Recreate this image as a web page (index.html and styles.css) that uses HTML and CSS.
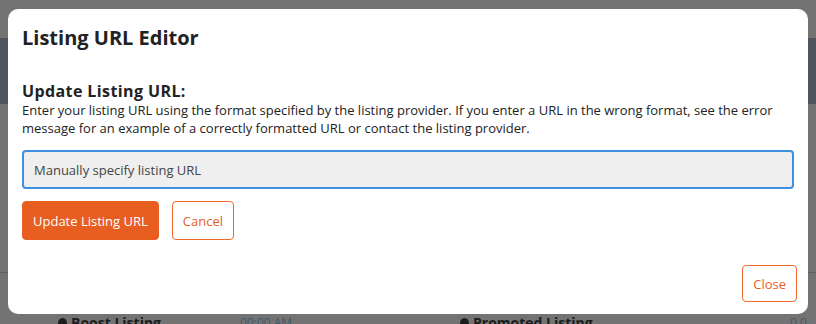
FILE: index.html
```html
<!DOCTYPE html>
<html lang="en">
<head>
  <meta charset="UTF-8" />
  <meta name="viewport" content="width=device-width, initial-scale=1.0" />
  <title>Listing URL Editor</title>
  <link rel="stylesheet" href="styles.css">
</head>
<body>
  <div class="page">
    <div class="page-header"></div>
    <div class="page-body"></div>
    <div class="page-rule"></div>
    <div class="page-footer">
      <span class="footer-item"><span class="dot"></span>Boost Listing</span>
      <span class="footer-meta">00:00 AM</span>
      <span class="footer-item"><span class="dot"></span>Promoted Listing</span>
      <span class="footer-meta">0.0</span>
    </div>
  </div>

  <div class="overlay">
    <div class="modal">
      <h1 class="modal-title">Listing URL Editor</h1>

      <div class="modal-content">
        <h2 class="field-label">Update Listing URL:</h2>
        <p class="field-help">Enter your listing URL using the format specified by the listing provider. If you enter a URL in the wrong format, see the error message for an example of a correctly formatted URL or contact the listing provider.</p>
        <input class="url-input" type="text" placeholder="Manually specify listing URL" />
        <div class="actions">
          <button class="btn btn-primary">Update Listing URL</button>
          <button class="btn btn-outline">Cancel</button>
        </div>
      </div>

      <div class="modal-footer">
        <button class="btn btn-outline btn-close">Close</button>
      </div>
    </div>
  </div>
</body>
</html>
```

FILE: styles.css
```css
body {
  margin: 0;
  background-color: #737373;
  font-family: "Open Sans", Arial, sans-serif;
  overflow: hidden;
  height: 324px;
}

/* page underneath the dimmed overlay */
.page {
  display: flex;
  flex-direction: column;
  height: 100%;
}

.page-header {
  margin-top: 38px;
  height: 66px;
  background-color: #4d555e;
}

.page-body {
  flex: 1;
}

.page-rule {
  height: 1px;
  background-color: #5e5e5e;
}

.page-footer {
  height: 51px;
  box-sizing: border-box;
  padding: 42px 0 0 58px;
  display: grid;
  grid-template-columns: 182px 220px 330px auto;
  align-items: start;
  overflow: hidden;
  white-space: nowrap;
  font-size: 14px;
  font-weight: 700;
  line-height: 16px;
  color: #1c1c1c;
}

.footer-item {
  display: flex;
  align-items: center;
  gap: 4px;
}

.footer-item .dot {
  width: 9px;
  height: 11px;
  border-radius: 50%;
  background-color: #1c1c1c;
}

.footer-meta {
  font-weight: 400;
  font-size: 12px;
  color: #44596a;
}

.overlay {
  position: fixed;
  inset: 0;
}

.modal {
  position: absolute;
  left: 8px;
  top: 9px;
  width: 800px;
  height: 305px;
  box-sizing: border-box;
  background-color: #fff;
  border-radius: 10px;
  padding: 0 14px;
  display: flex;
  flex-direction: column;
}

.modal-title {
  margin: 16px 0 0;
  font-size: 20px;
  font-weight: 700;
  color: #222;
  line-height: 26px;
}

.modal-content {
  margin-top: 30px;
}

.field-label {
  margin: 0;
  font-size: 16px;
  font-weight: 700;
  letter-spacing: 0.4px;
  color: #222;
  line-height: 20px;
}

.field-help {
  margin: 0;
  font-size: 13px;
  line-height: 18px;
  color: #222;
}

.url-input {
  display: block;
  box-sizing: border-box;
  width: 100%;
  height: 39px;
  margin-top: 13px;
  padding: 0 10px;
  background-color: #efefef;
  border: 2px solid #3d8fe0;
  border-radius: 4px;
  font-family: inherit;
  font-size: 13px;
  outline: none;
}

.url-input::placeholder {
  color: #444;
}

.actions {
  display: flex;
  gap: 13px;
  margin-top: 12px;
}

.btn {
  height: 39px;
  padding: 0 10px;
  font-family: inherit;
  font-size: 13px;
  border-radius: 4px;
  cursor: pointer;
}

.btn-primary {
  background-color: #e85d20;
  border: 1px solid #e85d20;
  color: #fff;
}

.btn-outline {
  background-color: #fff;
  border: 1.5px solid #ef6a2c;
  color: #e8601f;
}

.modal-footer {
  margin-top: auto;
  margin-bottom: 12px;
  display: flex;
  justify-content: flex-end;
}

.btn-close {
  height: 37px;
  margin-right: -3px;
}
```
